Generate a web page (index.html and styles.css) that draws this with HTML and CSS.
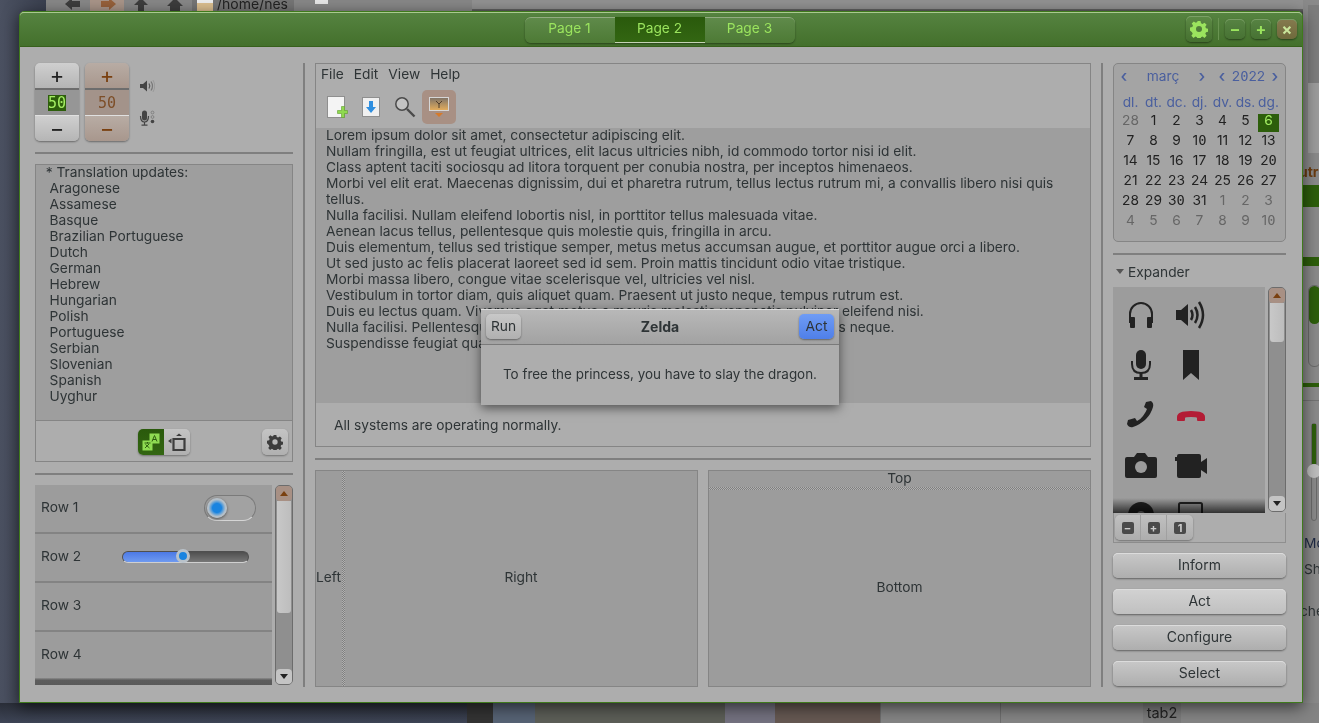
FILE: index.html

```html
<!DOCTYPE html>
<html lang="ca">
<head>
  <meta charset="UTF-8">
  <title>Widget Factory</title>
  <link rel="stylesheet" href="styles.css">
</head>
<body>
  <!-- desktop and the windows behind -->
  <div class="back-top">
    <svg class="back-icons" width="140" height="11" viewBox="0 0 140 11">
      <rect x="44" y="0" width="34" height="11" fill="#a89488"/>
      <path d="M19 5l7-6v3h8v6h-8v3z" transform="translate(0,-1)" fill="#3d3d3d"/>
      <path d="M70 5l-7-6v3h-8v6h8v3z" transform="translate(0,-1)" fill="#96603a"/>
      <path d="M95 -2l7 7h-4v6h-6v-6h-4z" fill="#3d3d3d"/>
      <path d="M129 -2l8 8h-3v5h-10v-5h-3z" fill="#3d3d3d"/>
    </svg>
    <span class="back-path"><i class="folder"></i>/home/nes</span>
    <i class="back-mark"></i>
    <span class="back-strip"></span>
  </div>
  <div class="back-right">
    <span class="br-sb"></span>
    <span class="br-text">utr</span>
    <span class="br-green"></span>
    <span class="br-line"></span>
    <span class="br-v1"><i></i></span>
    <span class="br-bar"></span>
    <span class="br-rule"></span>
    <span class="br-v2"><i></i><b></b></span>
    <span class="br-mo">Mo</span>
    <span class="br-sh">Sh</span>
    <span class="br-che">che</span>
  </div>
  <div class="back-bottom">
    <span class="ph ph-dark"></span>
    <span class="ph ph-diag"></span>
    <span class="ph ph-blue"></span>
    <span class="ph ph-grey"></span>
    <span class="ph ph-mauve"></span>
    <span class="ph ph-brown"></span>
    <span class="ph ph-app"><span class="tab2">tab2</span></span>
  </div>

  <div class="window">
    <header class="titlebar">
      <div class="tabs">
        <span class="tab">Page 1</span>
        <span class="tab active">Page 2</span>
        <span class="tab">Page 3</span>
      </div>
      <div class="title-actions">
        <button class="gear-btn">
          <svg width="18" height="18" viewBox="0 0 18 18"><use href="#gear" fill="#9be45e"/></svg>
        </button>
        <span class="title-sep"></span>
        <button class="win-btn">&#8211;</button>
        <button class="win-btn">+</button>
        <button class="win-btn close">&#215;</button>
      </div>
    </header>

    <div class="content">
      <!-- left column -->
      <div class="col col-left">
        <div class="volumes">
          <div class="spin">
            <span class="spin-btn">+</span>
            <span class="spin-val"><em>50</em></span>
            <span class="spin-btn">&#8722;</span>
          </div>
          <div class="spin warm">
            <span class="spin-btn">+</span>
            <span class="spin-val">50</span>
            <span class="spin-btn">&#8722;</span>
          </div>
          <div class="vol-icons">
            <svg width="16" height="16" viewBox="0 0 16 16">
              <path d="M1 6h3l4-3.500v11L4 10H1z" fill="#444"/>
              <path d="M10 5.500q1.600 2.500 0 5" fill="none" stroke="#555" stroke-width="1.200"/>
              <path d="M12 3.500q3 4.500 0 9" fill="none" stroke="#777" stroke-width="1.200"/>
              <path d="M14 2q3.400 6 0 12" fill="none" stroke="#999" stroke-width="1"/>
            </svg>
            <svg width="16" height="16" viewBox="0 0 16 16">
              <rect x="3" y="0.500" width="5" height="10" rx="2.500" fill="#444"/>
              <path d="M1.500 6q0 6 4 6t4-6" fill="none" stroke="#444" stroke-width="1.200"/>
              <path d="M5.500 12v3M2.500 15.200h6" stroke="#444" stroke-width="1.200"/>
              <circle cx="13.500" cy="2.500" r="1.400" fill="none" stroke="#777" stroke-width=".8"/>
              <circle cx="13.500" cy="7" r="1.400" fill="none" stroke="#777" stroke-width=".8"/>
              <circle cx="13.500" cy="11.500" r="1.800" fill="#444"/>
            </svg>
          </div>
        </div>
        <hr class="rule">
        <div class="changes">
          <pre class="changes-text"><span class="changes-lines">  * Translation updates:
   Aragonese
   Assamese
   Basque
   Brazilian Portuguese
   Dutch
   German
   Hebrew
   Hungarian
   Polish
   Portuguese
   Serbian
   Slovenian
   Spanish
   Uyghur</span></pre>
          <div class="changes-bar">
            <div class="toggle-group">
              <span class="toggle on">
                <svg width="20" height="20" viewBox="0 0 20 20">
                  <rect x="8.500" y="1.500" width="10" height="10" fill="#8fdc52"/>
                  <rect x="1.500" y="8.500" width="10" height="10" fill="#8fdc52"/>
                  <path d="M11 9.500l2.500-6 2.500 6M12 7.500h3" fill="none" stroke="#2f5e10" stroke-width="1"/>
                  <path d="M3.500 11h6M6.500 10v1.500M4 16l4-4M4.500 12.500l4 3.500" fill="none" stroke="#2f5e10" stroke-width="1"/>
                </svg>
              </span>
              <span class="toggle">
                <svg width="20" height="20" viewBox="0 0 20 20">
                  <path d="M6.500 7h11v11h-11z" fill="none" stroke="#3d3d3d" stroke-width="2.200"/>
                  <path d="M1 9l3.500-2.500v5zM9 4l3-2.500 3 2.500z" fill="#3d3d3d"/>
                </svg>
              </span>
            </div>
            <button class="small-gear">
              <svg width="16" height="16" viewBox="0 0 18 18"><use href="#gear" fill="#3d3d3d"/></svg>
            </button>
          </div>
        </div>
        <hr class="rule">
        <div class="rows-wrap">
          <div class="rows">
            <div class="row">Row 1
              <span class="switch"><i></i></span>
            </div>
            <div class="row">Row 2
              <span class="slider"><span class="slider-fill"></span><i></i></span>
            </div>
            <div class="row">Row 3</div>
            <div class="row">Row 4</div>
            <div class="rows-fade"></div>
          </div>
          <div class="scrollbar">
            <span class="sb-btn up"></span>
            <span class="sb-thumb thumb-rows"></span>
            <span class="sb-btn down"></span>
          </div>
        </div>
      </div>

      <span class="vrule"></span>

      <!-- middle column -->
      <div class="col col-mid">
        <div class="editor">
          <nav class="menubar">
            <span>File</span><span>Edit</span><span>View</span><span>Help</span>
          </nav>
          <div class="toolbar">
            <span class="tool">
              <svg width="24" height="26" viewBox="0 0 24 26">
                <rect x="2.500" y="2.500" width="17" height="21" fill="#f4f4f4" stroke="#8f8f8f"/>
                <path d="M14 15h4v-4h3v4h3v3h-3v4h-3v-4h-4z" transform="translate(-1.500,1.500)" fill="#8fd94f" stroke="#5f9d2e" stroke-width=".6"/>
              </svg>
            </span>
            <span class="tool">
              <svg width="22" height="24" viewBox="0 0 22 24">
                <rect x="2.500" y="2.500" width="17" height="19" fill="#f0f0f0" stroke="#8f8f8f"/>
                <path d="M9 6h4v6h3l-5 6-5-6h3z" fill="#2f8fe0"/>
              </svg>
            </span>
            <span class="tool">
              <svg width="24" height="24" viewBox="0 0 24 24">
                <circle cx="9" cy="9" r="6.200" fill="#c4c4c4" stroke="#4a4a4a" stroke-width="1.500"/>
                <path d="M14 14l7.500 7.500" stroke="#4a4a4a" stroke-width="2.400"/>
              </svg>
            </span>
            <span class="tool tool-on">
              <svg width="22" height="24" viewBox="0 0 22 24">
                <defs>
                  <linearGradient id="dusk" x1="0" y1="0" x2="0" y2="1">
                    <stop offset="0" stop-color="#7d7267"/>
                    <stop offset="1" stop-color="#e5ae5c"/>
                  </linearGradient>
                </defs>
                <rect x="1.500" y="2.500" width="19" height="13" fill="url(#dusk)" stroke="#d6d6d6"/>
                <path d="M11 13V8M8 6l3 3 3-3" stroke="#4f3c2a" fill="none"/>
                <path d="M7 18h8l-4 4z" fill="#d67a2a"/>
              </svg>
            </span>
          </div>
          <div class="lorem">
            <p>Lorem ipsum dolor sit amet, consectetur adipiscing elit.</p>
            <p>Nullam fringilla, est ut feugiat ultrices, elit lacus ultricies nibh, id commodo tortor nisi id elit.</p>
            <p>Class aptent taciti sociosqu ad litora torquent per conubia nostra, per inceptos himenaeos.</p>
            <p>Morbi vel elit erat. Maecenas dignissim, dui et pharetra rutrum, tellus lectus rutrum mi, a convallis libero nisi quis tellus.</p>
            <p>Nulla facilisi. Nullam eleifend lobortis nisl, in porttitor tellus malesuada vitae.</p>
            <p>Aenean lacus tellus, pellentesque quis molestie quis, fringilla in arcu.</p>
            <p>Duis elementum, tellus sed tristique semper, metus metus accumsan augue, et porttitor augue orci a libero.</p>
            <p>Ut sed justo ac felis placerat laoreet sed id sem. Proin mattis tincidunt odio vitae tristique.</p>
            <p>Morbi massa libero, congue vitae scelerisque vel, ultricies vel nisl.</p>
            <p>Vestibulum in tortor diam, quis aliquet quam. Praesent ut justo neque, tempus rutrum est.</p>
            <p>Duis eu lectus quam. Vivamus eget metus a mauris molestie venenatis pulvinar eleifend nisi.</p>
            <p>Nulla facilisi. Pellentesque at dolor sit amet purus dapibus pulvinar molestie quis neque.</p>
            <p>Suspendisse feugiat quam quis dolor accumsan cursus.</p>
          </div>
          <div class="status">All systems are operating normally.</div>
        </div>
        <hr class="rule">
        <div class="panes">
          <div class="pane pane-h">
            <span class="pane-left">Left</span>
            <span class="grip-v"></span>
            <span class="pane-fill">Right</span>
          </div>
          <div class="pane pane-v">
            <span class="pane-top">Top</span>
            <span class="grip-h"></span>
            <span class="pane-fill">Bottom</span>
          </div>
        </div>
      </div>

      <span class="vrule"></span>

      <!-- right column -->
      <div class="col col-right">
        <div class="calendar">
          <div class="cal-head">
            <span class="cal-nav">&#8249;</span><span class="cal-month">març</span><span class="cal-nav">&#8250;</span>
            <span class="cal-nav nav-y">&#8249;</span><span class="cal-year">2<span class="zero">0</span>22</span><span class="cal-nav">&#8250;</span>
          </div>
          <div class="cal-grid" id="cal"></div>
        </div>
        <hr class="rule">
        <div class="expander"><i class="arrow"></i>Expander</div>
        <div class="icons-wrap">
          <div class="icons">
            <div class="icon-grid">
              <svg width="32" height="32" viewBox="0 0 32 32">
                <path d="M5 24v-9a11 11 0 0 1 22 0v9" fill="none" stroke="#222" stroke-width="2"/>
                <rect x="5" y="18" width="5" height="11" rx="1" fill="#222"/>
                <rect x="22" y="18" width="5" height="11" rx="1" fill="#222"/>
              </svg>
              <svg width="32" height="32" viewBox="0 0 32 32">
                <path d="M1 11h5l7-6v22l-7-6H1z" fill="#222"/>
                <path d="M16 11q3 5 0 10M20 8q5 8 0 16M24 3q8 13 0 26" fill="none" stroke="#222" stroke-width="2.500"/>
              </svg>
              <svg width="32" height="32" viewBox="0 0 32 32">
                <rect x="11" y="1" width="10" height="19" rx="5" fill="#222"/>
                <path d="M7 12v3q0 9 9 9t9-9v-3" fill="none" stroke="#222" stroke-width="2"/>
                <path d="M16 24v5" stroke="#222" stroke-width="3"/>
                <rect x="9" y="28" width="14" height="3" fill="#222"/>
              </svg>
              <svg width="32" height="32" viewBox="0 0 32 32">
                <path d="M8 1h16v30l-8-7-8 7z" fill="#222"/>
              </svg>
              <svg width="32" height="32" viewBox="0 0 32 32">
                <path d="M21 3l5-1q3 2 2 6-2 7-7 12t-13 8q-4 1-6-3l1-4 7-2 2 3q3-1 6-5t4-7l-3-2z" fill="#222"/>
              </svg>
              <svg width="32" height="32" viewBox="0 0 32 32">
                <path d="M2 21v-3q0-6 14-6t14 6v3q0 1-1 1h-6q-1 0-1-1v-2q0-1-6-1t-6 1v2q0 1-1 1H3q-1 0-1-1z" fill="#b31c35"/>
              </svg>
              <svg width="32" height="32" viewBox="0 0 32 32">
                <path d="M2 8h7l3-4h8l3 4h7q2 0 2 2v17q0 2-2 2H2q-2 0-2-2V10q0-2 2-2z" fill="#222"/>
                <circle cx="16" cy="18" r="6" fill="#9c9c9c"/>
              </svg>
              <svg width="32" height="32" viewBox="0 0 32 32">
                <path d="M4 5h20q2 0 2 2v6l6-4v16l-6-4v6q0 2-2 2H4q-2 0-2-2V12H0V8h2V7q0-2 2-2z" fill="#222"/>
              </svg>
              <svg width="32" height="32" viewBox="0 0 32 32">
                <circle cx="16" cy="16" r="13" fill="#222"/><circle cx="16" cy="16" r="4" fill="#9c9c9c"/>
              </svg>
              <svg width="32" height="32" viewBox="0 0 32 32">
                <rect x="4" y="4" width="23" height="26" rx="1.500" fill="none" stroke="#222" stroke-width="2"/>
              </svg>
            </div>
            <div class="icons-fade"></div>
          </div>
          <div class="scrollbar sb-short">
            <span class="sb-btn up"></span>
            <span class="sb-thumb thumb-icons"></span>
            <span class="sb-btn down"></span>
          </div>
        </div>
        <div class="icon-bar">
          <div class="icon-btns">
            <span><b>&#8211;</b></span><span><b>+</b></span><span><b>1</b></span>
          </div>
        </div>
        <div class="actions">
          <button>Inform</button>
          <button class="lit">Act</button>
          <button>Configure</button>
          <button>Select</button>
        </div>
      </div>
    </div>
  </div>

  <div class="dialog">
    <div class="dialog-head">
      <button class="dlg-btn">Run</button>
      <strong>Zelda</strong>
      <button class="dlg-btn blue">Act</button>
    </div>
    <div class="dialog-body">To free the princess, you have to slay the dragon.</div>
  </div>

  <svg width="0" height="0" class="defs">
    <defs>
      <path id="gear" fill-rule="evenodd" d="M7.500 1h3l.5 2.300 1.500.7 2-1.300 2.100 2.100-1.300 2 .7 1.500 2.300.5v3l-2.300.5-.7 1.500 1.300 2-2.100 2.100-2-1.300-1.500.7-.5 2.300h-3l-.5-2.300-1.500-.7-2 1.300-2.100-2.100 1.300-2-.7-1.500L0 10.500v-3l2.300-.5.7-1.500-1.300-2 2.100-2.100 2 1.300 1.500-.7zM9 6a3 3 0 1 0 0 6 3 3 0 0 0 0-6z"/>
    </defs>
  </svg>

  <script>
    const heads = ["dl.", "dt.", "dc.", "dj.", "dv.", "ds.", "dg."];
    const days = [28,1,2,3,4,5,6,7,8,9,10,11,12,13,14,15,16,17,18,19,20,21,22,23,24,25,26,27,28,29,30,31,1,2,3,4,5,6,7,8,9,10];
    const cal = document.getElementById("cal");

    heads.forEach(function (h) {
      const el = document.createElement("span");
      el.className = "cal-dow";
      el.textContent = h;
      cal.appendChild(el);
    });

    days.forEach(function (d, i) {
      const el = document.createElement("span");
      el.className = "cal-day";
      if (i === 0 || i > 31) el.className += " other";
      if (i === 6) el.className += " today";
      // the font has no slashed zero, borrow it
      el.innerHTML = String(d).replace("0", '<span class="zero">0</span>');
      cal.appendChild(el);
    });
  </script>
</body>
</html>
```

FILE: styles.css

```css
html, body {
  margin: 0;
  height: 100%;
  overflow: hidden;
}

body {
  position: relative;
  width: 1319px;
  height: 723px;
  font-family: "Inter", "Noto Sans", sans-serif;
  font-size: 13.75px;
  color: #2e3436;
  background: linear-gradient(to right, #4b5161, #343a49 60px, #3a4150);
}

button {
  font: inherit;
  color: inherit;
  padding: 0;
  border: 0;
}

p {
  margin: 0;
}

.defs {
  position: absolute;
}

.zero {
  font-family: "DejaVu Sans Mono", monospace;
}

/* windows behind */
.back-top {
  position: absolute;
  left: 46px;
  top: 0;
  width: 1273px;
  height: 14px;
  display: flex;
  background: #878787;
}

.back-icons {
  flex: none;
}

.back-path {
  flex: none;
  display: flex;
  align-items: flex-start;
  width: 102px;
  height: 12px;
  margin-left: 6px;
  overflow: hidden;
  line-height: 8px;
  font-size: 14px;
  color: #222;
  background: #757575;
}

.folder {
  width: 16px;
  height: 12px;
  margin: 0 4px 0 5px;
  background: linear-gradient(#eee 3px, #dcbf90 3px);
}

.back-mark {
  width: 13px;
  height: 4px;
  margin-left: 21px;
  background: #e6e6e6;
}

.back-strip {
  flex: 1;
  margin-left: 144px;
  height: 14px;
  background: linear-gradient(#919191 9px, #666 9px, #3f3f3f);
}

.back-right {
  position: absolute;
  left: 1303px;
  top: 0;
  width: 16px;
  height: 723px;
  overflow: hidden;
  background: #8a8a8a;
}

.back-right span {
  position: absolute;
  left: 0;
}

.back-right .br-sb {
  left: 5px;
  top: 5px;
  width: 11px;
  height: 148px;
  background: linear-gradient(#7d7d7d 78px, #9c9c9c 78px);
}

.back-right .br-text {
  top: 164px;
  left: -4px;
  font-weight: 700;
  font-size: 14px;
  color: #6b3c10;
  line-height: 16px;
}

.back-right .br-green {
  top: 185px;
  width: 16px;
  height: 22px;
  background: #2d5e0b;
}

.back-right .br-line {
  top: 257px;
  width: 16px;
  height: 9px;
  background: #2d5e0b;
}

.back-right .br-v1 {
  left: 5px;
  top: 285px;
  width: 11px;
  height: 80px;
  border: 1px solid #6a6a6a;
  border-radius: 6px;
}

.br-v1 i {
  display: block;
  height: 38px;
  background: #2d5e0b;
  border-radius: 6px;
}

.back-right .br-bar {
  top: 383px;
  width: 16px;
  height: 4px;
  background: #2d5e0b;
}

.back-right .br-rule {
  top: 400px;
  width: 16px;
  height: 1px;
  background: #737373;
}

.back-right .br-v2 {
  top: 423px;
  left: 8px;
  width: 4px;
  height: 96px;
  border: 1px solid #6a6a6a;
  border-radius: 3px;
}

.br-v2 i {
  display: block;
  height: 40px;
  background: #2d5e0b;
}

.br-v2 b {
  position: absolute;
  left: -5px;
  top: 40px;
  width: 14px;
  height: 14px;
  border-radius: 50%;
  background: #bdbdbd;
}

.back-right .br-mo {
  top: 535px;
  left: 1px;
  color: #1f2a44;
}

.back-right .br-sh {
  top: 561px;
  left: 1px;
}

.back-right .br-che {
  top: 603px;
  left: -3px;
}

.back-bottom {
  position: absolute;
  left: 0;
  top: 703px;
  width: 1319px;
  height: 20px;
  display: flex;
}

.ph {
  height: 20px;
  flex: none;
}

.ph-dark {
  width: 467px;
  background: linear-gradient(#2a2e38, #3e4556);
}

.ph-diag {
  width: 26px;
  background: #333;
}

.ph-blue {
  width: 42px;
  background: #566274;
}

.ph-grey {
  width: 190px;
  background: #5c5e57;
}

.ph-mauve {
  width: 50px;
  background: #73717f;
}

.ph-brown {
  width: 105px;
  background: #655852;
}

.ph-app {
  flex: 1;
  position: relative;
  background: linear-gradient(to right, #6e6e6e 1px, #848484 1px 120px, #6e6e6e 120px 121px, #848484 121px);
}

.tab2 {
  position: absolute;
  left: 263px;
  top: 0;
  width: 38px;
  height: 20px;
  line-height: 20px;
  text-align: center;
  font-size: 14.5px;
  background: #7b7b7b;
  color: #222;
}

/* main window */
.window {
  position: absolute;
  left: 19px;
  top: 11px;
  width: 1282px;
  height: 690px;
  display: flex;
  flex-direction: column;
  background: #adadad;
  border: 1px solid #3f7a1c;
  border-radius: 5px 5px 0 0;
  box-shadow: 0 4px 16px rgba(0, 0, 0, 0.6);
}

.titlebar {
  height: 35px;
  flex: none;
  position: relative;
  display: flex;
  justify-content: center;
  align-items: center;
  background: linear-gradient(#558340, #44702c);
  border-top: 1px solid #a9c98f;
  border-bottom: 1px solid #37601c;
  box-sizing: border-box;
  border-radius: 4px 4px 0 0;
}

.tabs {
  display: flex;
  height: 26px;
  margin-left: -3px;
  border-radius: 6px;
  box-shadow: 0 1px 2px rgba(0, 0, 0, 0.4);
}

.tab {
  width: 90px;
  line-height: 21px;
  text-align: center;
  color: #9be45e;
  background: linear-gradient(#5f8a4a, #4d7a35);
  border-top: 1px solid #93ad82;
  box-sizing: border-box;
}

.tab:first-child {
  border-radius: 6px 0 0 6px;
}

.tab:last-child {
  border-radius: 0 6px 6px 0;
}

.tab.active {
  background: linear-gradient(#2a5a0c, #336612);
  border-top: 0;
  border-bottom: 1px solid #c5d4b5;
  line-height: 23px;
}

.title-actions {
  position: absolute;
  right: 5px;
  top: 3px;
  display: flex;
  align-items: center;
}

.gear-btn {
  width: 26px;
  height: 26px;
  display: flex;
  align-items: center;
  justify-content: center;
  border-radius: 5px;
  background: linear-gradient(#5d8a45, #457030);
  box-shadow: 0 1px 2px rgba(0, 0, 0, 0.45), inset 0 1px 0 #7ba066;
}

.title-sep {
  width: 1px;
  height: 22px;
  margin: 0 6px;
  background: #6a9452;
}

.win-btn {
  width: 20px;
  height: 20px;
  margin-right: 6px;
  border-radius: 5px;
  line-height: 17px;
  font-weight: 700;
  font-size: 16px;
  color: #9be45e;
  background: linear-gradient(#578343, #477233);
  box-shadow: 0 1px 2px rgba(0, 0, 0, 0.45), inset 0 1px 0 #789d64;
}

.win-btn:last-child {
  margin-right: 0;
}

.win-btn.close {
  background: linear-gradient(#857a4e, #6f6a3c);
  color: #c9e69b;
}

.content {
  flex: 1;
  min-height: 0;
  display: flex;
  padding: 16px 16px 15px 15px;
  box-sizing: border-box;
}

.col {
  display: flex;
  flex-direction: column;
  min-width: 0;
}

.col-left {
  width: 258px;
  flex: none;
}

.col-mid {
  flex: 1;
}

.col-right {
  width: 173px;
  flex: none;
}

.vrule {
  flex: none;
  width: 2px;
  margin: 0 10px;
  background: #7f7f7f;
}

.rule {
  flex: none;
  height: 2px;
  margin: 11px 0 10px;
  border: 0;
  background: #7f7f7f;
}

/* spin buttons */
.volumes {
  display: flex;
  gap: 6px;
  height: 78px;
  flex: none;
}

.spin {
  width: 44px;
  height: 78px;
  display: flex;
  flex-direction: column;
  border-radius: 5px;
  overflow: hidden;
  box-shadow: 0 1px 2px rgba(0, 0, 0, 0.4);
  color: #222;
}

.spin-btn {
  height: 25px;
  text-align: center;
  font-size: 22px;
  line-height: 25px;
  background: linear-gradient(#cfcfcf, #b5b5b5);
}

.spin-val {
  height: 28px;
  border-top: 2px solid #6d6d6d;
  border-bottom: 1px solid #e0e0e0;
  box-sizing: border-box;
  display: flex;
  align-items: center;
  justify-content: center;
  background: #969696;
  font-family: "DejaVu Sans Mono", monospace;
  font-size: 15px;
}

.spin-val em {
  font-style: normal;
  line-height: 16px;
  color: #a4ee63;
  background: #2d5e0b;
}

.spin.warm {
  color: #7a4010;
}

.warm .spin-btn {
  background: linear-gradient(#b8aca4, #a8978d);
}

.warm .spin-val {
  background: #a3938a;
  color: #7d4e28;
}

.vol-icons {
  display: flex;
  flex-direction: column;
  gap: 16px;
  margin: 15px 0 0 4px;
}

/* changelog */
.changes {
  height: 298px;
  flex: none;
  display: flex;
  flex-direction: column;
  border: 1px solid #858585;
  box-sizing: border-box;
}

.changes-text {
  flex: 1;
  margin: 0;
  padding-left: 2px;
  font: inherit;
  line-height: 16px;
  background: #9e9e9e;
  border-bottom: 1px solid #858585;
}

.changes-lines {
  display: block;
  margin-top: -1px;
}

.changes-bar {
  height: 40px;
  flex: none;
  position: relative;
  display: flex;
  justify-content: center;
  align-items: center;
  padding-top: 2px;
  box-sizing: border-box;
}

.toggle-group {
  display: flex;
  height: 26px;
  border-radius: 5px;
  box-shadow: 0 1px 2px rgba(0, 0, 0, 0.35);
}

.toggle {
  width: 26px;
  display: flex;
  align-items: center;
  justify-content: center;
  background: linear-gradient(#c4c4c4, #b0b0b0);
  border-radius: 0 5px 5px 0;
}

.toggle.on {
  background: linear-gradient(#2a5a0c, #336612);
  border-radius: 5px 0 0 5px;
}

.small-gear {
  position: absolute;
  right: 4px;
  top: 8px;
  width: 26px;
  height: 26px;
  display: flex;
  align-items: center;
  justify-content: center;
  border-radius: 5px;
  background: linear-gradient(#c4c4c4, #b0b0b0);
  box-shadow: 0 1px 2px rgba(0, 0, 0, 0.35);
}

/* rows */
.rows-wrap {
  flex: 1;
  min-height: 0;
  display: flex;
  gap: 3px;
  margin-bottom: 2px;
}

.rows {
  flex: 1;
  position: relative;
  overflow: hidden;
  background: #9c9c9c;
}

.row {
  height: 49px;
  display: flex;
  align-items: center;
  position: relative;
  padding: 0 0 4px 6px;
  box-sizing: border-box;
  border-bottom: 2px solid #838383;
}

.switch {
  position: absolute;
  left: 169px;
  top: 10px;
  width: 50px;
  height: 24px;
  border: 1px solid #7a7a7a;
  border-bottom-color: #d5d5d5;
  border-radius: 13px;
  background: #a2a2a2;
}

.switch i {
  position: absolute;
  left: 2px;
  top: 2px;
  width: 20px;
  height: 20px;
  border-radius: 50%;
  background: radial-gradient(circle closest-side, #1a84e0 45%, #5fa0d8 62%, #b4bfc8 85%);
  box-shadow: 0 1px 3px rgba(0, 0, 0, 0.5);
}

.slider {
  position: absolute;
  left: 87px;
  top: 17px;
  width: 125px;
  height: 10px;
  border: 1px solid #4f4f4f;
  border-bottom-color: #d0d0d0;
  border-radius: 6px;
  background: linear-gradient(#4f4f4f, #777);
}

.slider-fill {
  display: block;
  width: 60px;
  height: 10px;
  border-radius: 6px 0 0 6px;
  background: linear-gradient(#4c79e6, #6f9af0);
}

.slider i {
  position: absolute;
  left: 53px;
  top: -3px;
  width: 14px;
  height: 14px;
  border-radius: 50%;
  box-sizing: border-box;
  border: 3px solid #b9c2ca;
  background: #1a84e0;
}

.rows-fade {
  position: absolute;
  left: 0;
  right: 0;
  bottom: 0;
  height: 7px;
  background: linear-gradient(#8d8d8d 0, #5d5d5d 30%, #5a5a5a);
}

/* scrollbars */
.scrollbar {
  width: 18px;
  flex: none;
  display: flex;
  flex-direction: column;
  box-sizing: border-box;
  border: 1px solid #6c6c6c;
  border-radius: 5px;
  background: #8f8f8f;
  position: relative;
}

.sb-short {
  margin-bottom: 1px;
}

.sb-btn {
  height: 15px;
  flex: none;
  position: relative;
  background: #c4c4c4;
  border-radius: 4px;
}

.sb-btn.up {
  background: #a89084;
}

.sb-btn::after {
  content: "";
  position: absolute;
  left: 4px;
  top: 5px;
  border: 4px solid transparent;
  border-top: 0;
  border-bottom: 5px solid #7a4010;
}

.sb-btn.down {
  margin-top: auto;
}

.sb-btn.down::after {
  border-top: 5px solid #222;
  border-bottom: 0;
}

.sb-thumb {
  display: block;
  margin: 0 1px;
  background: linear-gradient(to right, #c8c8c8, #bdbdbd);
  border-radius: 0 0 3px 3px;
}

.thumb-rows {
  height: 112px;
}

.thumb-icons {
  height: 39px;
}

/* editor */
.editor {
  height: 384px;
  flex: none;
  display: flex;
  flex-direction: column;
  border: 1px solid #858585;
  box-sizing: border-box;
}

.menubar {
  height: 24px;
  flex: none;
  display: flex;
  gap: 10px;
  align-items: center;
  padding: 0 0 4px 5px;
  box-sizing: border-box;
}

.toolbar {
  height: 40px;
  flex: none;
  display: flex;
  align-items: center;
  padding: 0 0 2px 4px;
  box-sizing: border-box;
}

.tool {
  width: 34px;
  height: 34px;
  display: flex;
  align-items: center;
  justify-content: center;
  border-radius: 5px;
}

.tool-on {
  background: #a89084;
}

.lorem {
  flex: 1;
  padding: 0 10px;
  line-height: 16px;
  background: #9e9e9e;
  overflow: hidden;
}

.lorem p:first-child {
  margin-top: -1px;
}

.status {
  height: 43px;
  flex: none;
  display: flex;
  align-items: center;
  padding-left: 18px;
  box-sizing: border-box;
}

.panes {
  flex: 1;
  min-height: 0;
  display: flex;
  gap: 10px;
}

.pane {
  flex: 1;
  display: flex;
  border: 1px solid #858585;
  background: #9c9c9c;
  box-sizing: border-box;
}

.pane-v {
  flex-direction: column;
}

.pane-left {
  width: 26px;
  display: flex;
  align-items: center;
  padding-bottom: 3px;
  box-sizing: border-box;
}

.grip-v {
  width: 3px;
  background: conic-gradient(#808080 25%, #b0b0b0 0 50%, #808080 0 75%, #b0b0b0 0) 0 0 / 2px 2px;
}

.pane-fill {
  flex: 1;
  display: flex;
  align-items: center;
  justify-content: center;
  padding-bottom: 3px;
}

.pane-top {
  height: 16px;
  line-height: 14px;
  text-align: center;
}

.grip-h {
  height: 3px;
  background: conic-gradient(#808080 25%, #b0b0b0 0 50%, #808080 0 75%, #b0b0b0 0) 0 0 / 2px 2px;
}

/* calendar */
.calendar {
  height: 179px;
  flex: none;
  box-sizing: border-box;
  border: 1px solid #858585;
  border-radius: 5px;
  background: #a4a4a4;
  padding: 2px 3px 0;
  color: #4a5f9e;
}

.cal-head {
  display: flex;
  align-items: center;
  height: 20px;
}

.cal-nav {
  width: 14px;
  text-align: center;
  font-size: 17px;
  font-weight: 500;
  line-height: 16px;
}

.cal-month {
  width: 64px;
  text-align: center;
}

.cal-year {
  flex: 1;
  text-align: center;
}

.nav-y {
  margin-left: 6px;
}

.cal-grid {
  display: grid;
  grid-template-columns: repeat(7, 23px);
  grid-template-rows: 18px repeat(6, 20px);
  justify-content: center;
  margin-top: 7px;
  color: #222;
  text-align: center;
  line-height: 18px;
}

.cal-dow {
  color: #4a5f9e;
}

.cal-day.other {
  color: #666;
}

.cal-day.today {
  color: #a4ee63;
  background: #2d5e0b;
  margin: 3px 1px 0;
  height: 18px;
  line-height: 12px;
}

/* expander */
.expander {
  height: 22px;
  flex: none;
  display: flex;
  align-items: center;
  padding: 0 0 9px 3px;
  box-sizing: border-box;
}

.arrow {
  width: 0;
  height: 0;
  margin-right: 4px;
  border: 4px solid transparent;
  border-bottom: 0;
  border-top: 5px solid #555;
}

.icons-wrap {
  height: 226px;
  flex: none;
  display: flex;
  gap: 3px;
}

.icons {
  flex: 1;
  position: relative;
  overflow: hidden;
  background: #9c9c9c;
}

.icon-grid {
  display: grid;
  grid-template-columns: repeat(2, 50px);
  grid-auto-rows: 50px;
  justify-items: center;
  align-items: center;
  padding: 3px 0 0 3px;
}

.icons-fade {
  position: absolute;
  left: 0;
  right: 0;
  bottom: 0;
  height: 15px;
  background: linear-gradient(#fff, #505050);
  mix-blend-mode: multiply;
}

.icon-bar {
  height: 30px;
  flex: none;
  border: 1px solid #8f8f8f;
  border-top: 0;
  box-sizing: border-box;
  padding: 2px 0 0 1px;
}

.icon-btns {
  display: inline-flex;
  height: 25px;
  border-radius: 5px;
  background: linear-gradient(#c0c0c0, #adadad);
  box-shadow: 0 1px 2px rgba(0, 0, 0, 0.35);
}

.icon-btns span {
  width: 26px;
  display: flex;
  align-items: center;
  justify-content: center;
  border-right: 1px solid #a0a0a0;
  box-sizing: border-box;
}

.icon-btns span:last-child {
  border-right: 0;
}

.icon-btns b {
  width: 12px;
  height: 12px;
  border-radius: 2px;
  line-height: 12px;
  font-size: 11px;
  text-align: center;
  color: #ccc;
  background: #4a4a4a;
}

.actions {
  display: flex;
  flex-direction: column;
  gap: 11px;
  margin-top: 10px;
}

.actions button {
  height: 25px;
  padding-bottom: 2px;
  font-size: 14px;
  border-radius: 5px;
  background: linear-gradient(#c8c8c8, #aeaeae);
  box-shadow: 0 1px 2px rgba(0, 0, 0, 0.45), inset 0 1px 0 #dcdcdc;
}

.actions button.lit {
  background: linear-gradient(#d2d2d2, #c0c0c0);
}

/* dialog */
.dialog {
  position: absolute;
  left: 481px;
  top: 309px;
  width: 358px;
  height: 96px;
  display: flex;
  flex-direction: column;
  background: #adadad;
  box-shadow: 0 3px 10px rgba(0, 0, 0, 0.55);
}

.dialog-head {
  height: 36px;
  flex: none;
  display: flex;
  align-items: center;
  justify-content: space-between;
  padding: 0 5px 2px;
  box-sizing: border-box;
  background: linear-gradient(#b8b8b8, #a2a2a2);
  border-top: 1px solid #dcdcdc;
  border-bottom: 1px solid #7a7a7a;
}

.dialog-head strong {
  font-size: 14px;
  font-weight: 700;
}

.dlg-btn {
  width: 35px;
  height: 25px;
  border-radius: 5px;
  background: linear-gradient(#c8c8c8, #b0b0b0);
  box-shadow: 0 1px 2px rgba(0, 0, 0, 0.4);
}

.dlg-btn.blue {
  background: linear-gradient(#6f9cf5, #4f7fe8);
}

.dialog-body {
  flex: 1;
  display: flex;
  align-items: center;
  justify-content: center;
  font-size: 13.45px;
  padding-bottom: 2px;
}
```
